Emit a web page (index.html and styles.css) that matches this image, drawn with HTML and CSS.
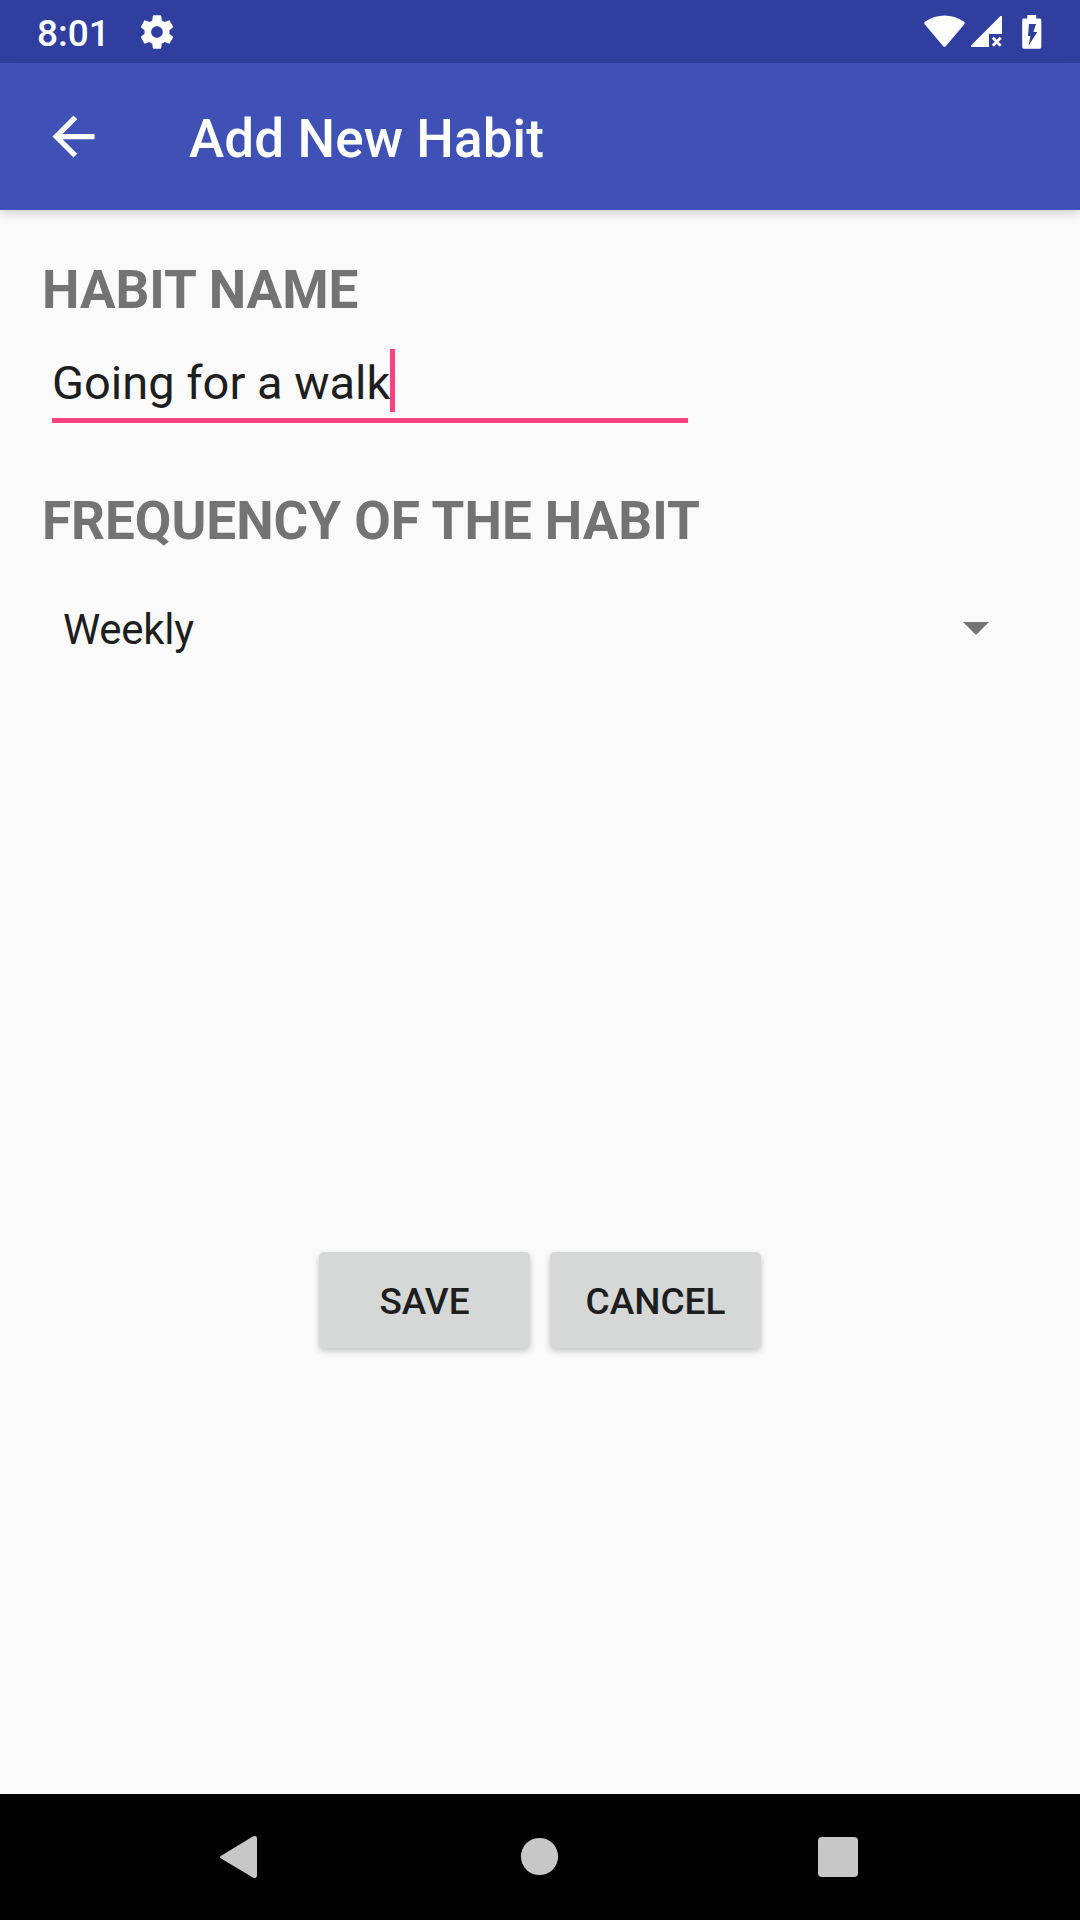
FILE: index.html
```html
<!DOCTYPE html>
<html lang="en">
<head>
<meta charset="utf-8">
<title>Add New Habit</title>
<link rel="stylesheet" href="styles.css">
</head>
<body>
<div class="status-bar">
  <span class="clock">8:01</span>
  <svg class="gear" viewBox="0 0 24 24"><path d="M19.43 12.98c.04-.32.07-.64.07-.98s-.03-.66-.07-.98l2.11-1.65c.19-.15.24-.42.12-.64l-2-3.46c-.12-.22-.39-.3-.61-.22l-2.49 1c-.52-.4-1.08-.73-1.69-.98l-.38-2.65C14.46 2.18 14.25 2 14 2h-4c-.25 0-.46.18-.49.42l-.38 2.65c-.61.25-1.17.59-1.69.98l-2.49-1c-.23-.09-.49 0-.61.22l-2 3.46c-.13.22-.07.49.12.64l2.11 1.65c-.04.32-.07.65-.07.98s.03.66.07.98l-2.11 1.65c-.19.15-.24.42-.12.64l2 3.46c.12.22.39.3.61.22l2.49-1c.52.4 1.08.73 1.69.98l.38 2.65c.03.24.24.42.49.42h4c.25 0 .46-.18.49-.42l.38-2.65c.61-.25 1.17-.59 1.69-.98l2.49 1c.23.09.49 0 .61-.22l2-3.46c.12-.22.07-.49-.12-.64l-2.11-1.65zM12 15.5c-1.93 0-3.5-1.57-3.5-3.5s1.57-3.5 3.5-3.5 3.5 1.57 3.5 3.5-1.57 3.5-3.5 3.5z"/></svg>
  <div class="system-icons">
    <svg class="wifi" viewBox="0 0 41 34"><path d="M.7 9.2Q-.4 7.600 1.200 6.500C13-1.600 28-1.600 39.800 6.500Q41.400 7.600 40.300 9.200L21.800 31.200Q20.500 32.500 19.200 31.200Z"/></svg>
    <svg class="signal" viewBox="0 0 31 32"><path d="M0 31V29.500L29.500 0H31V18H18V31Z"/><path class="cross" d="M21.800 21.800L29.700 29.700M29.700 21.800L21.800 29.700"/></svg>
    <svg class="battery" viewBox="0 0 20 34"><path fill-rule="evenodd" d="M5.300 0H14.200V3.500H18Q19.300 3.500 19.300 5V32Q19.300 33.700 17.800 33.700H1.700Q.2 33.700 .2 32V5Q.2 3.500 1.500 3.500H5.300ZM7 9L6 21H8.300L6.700 30.500L15.300 17H11.400L14 9Z"/></svg>
  </div>
</div>
<header class="app-bar">
  <svg class="back" viewBox="0 0 24 24"><path d="M20 11H7.830l5.590-5.590L12 4l-8 8 8 8 1.410-1.410L7.830 13H20v-2z"/></svg>
  <h1 class="title">Add New Habit</h1>
</header>
<main class="form">
  <h2 class="label">HABIT NAME</h2>
  <div class="text-field"><span class="value">Going for a walk</span><span class="caret"></span></div>
  <h2 class="label">FREQUENCY OF THE HABIT</h2>
  <div class="spinner">
    <span>Weekly</span>
    <svg class="arrow" viewBox="0 0 26 13"><path d="M0 0H26L13 13Z"/></svg>
  </div>
  <div class="actions">
    <button class="button" type="button">SAVE</button>
    <button class="button" type="button">CANCEL</button>
  </div>
</main>
<nav class="nav-bar">
  <svg viewBox="0 0 42 42"><path d="M2.500 19.600L33.800 .6Q38-1 38 2.500V39.500Q38 43 33.800 41.400L2.500 22.700Q-.7 21 2.500 19.600Z"/></svg>
  <svg viewBox="0 0 42 42"><circle cx="21.500" cy="20.500" r="18.600"/></svg>
  <svg viewBox="0 0 42 42"><rect x="1" y="1" width="40" height="40" rx="4"/></svg>
</nav>
</body>
</html>
```

FILE: styles.css
```css
* { box-sizing: border-box; }

body {
  margin: 0;
  height: 1920px;
  display: flex;
  flex-direction: column;
  background: #fafafa;
  color: #1e1e1e;
  font-family: Roboto, sans-serif;
  overflow: hidden;
}

svg { display: block; fill: #fff; flex: none; }

.status-bar {
  flex: none;
  height: 63px;
  display: flex;
  align-items: center;
  padding: 0 38px 0 37px;
  background: #303f9f;
  color: #fff;
}

.clock {
  width: 100px;
  padding-top: 3px;
  font-size: 37px;
  font-weight: 500;
  line-height: 43px;
}

.gear { width: 40px; height: 40px; }

.system-icons {
  display: flex;
  margin-left: auto;
}

.wifi { width: 41px; height: 34px; margin-right: 6px; }
.signal { width: 31px; height: 32px; margin: 1px 20px 0 0; }
.battery { width: 20px; height: 34px; }

.cross { stroke: #fff; stroke-width: 2.8; }

.app-bar {
  flex: none;
  height: 147px;
  display: flex;
  align-items: center;
  padding-left: 42px;
  background: #3f51b5;
  color: #fff;
  box-shadow: 0 3px 10px rgba(0, 0, 0, .18);
}

.back { width: 63px; height: 63px; }

.title {
  margin: 0 0 0 84px;
  padding-top: 4px;
  font-size: 53px;
  font-weight: 500;
  line-height: 62px;
  letter-spacing: .1px;
}

.form {
  flex: 1;
  display: flex;
  flex-direction: column;
  padding: 49px 42px 0;
}

.label {
  margin: 0;
  color: #737373;
  font-size: 53px;
  font-weight: 700;
  line-height: 62px;
}

.text-field {
  display: flex;
  align-items: flex-start;
  width: 636px;
  height: 74px;
  margin: 28px 0 67px 10px;
  border-bottom: 5px solid #ff4081;
  font-size: 47px;
}

.value { padding-top: 6px; line-height: 56px; }
.caret { width: 5px; height: 63px; background: #ff4081; }

.spinner {
  display: flex;
  align-items: center;
  justify-content: space-between;
  height: 84px;
  margin-top: 34px;
  padding: 0 49.5px 0 21px;
  font-size: 42px;
  line-height: 50px;
  letter-spacing: -.3px;
}

.spinner span { padding-top: 3px; }
.arrow { width: 26px; height: 13px; fill: #737373; }

.actions {
  display: flex;
  justify-content: center;
  gap: 20px;
  margin-top: 582px;
}

.button {
  width: 211px;
  height: 96px;
  padding: 3px 0 0;
  border: 0;
  border-radius: 5px;
  background: #d6d7d7;
  color: #1e1e1e;
  font: 500 37px/43px Roboto, sans-serif;
  box-shadow: 0 3px 6px rgba(0, 0, 0, .22);
}

.nav-bar {
  flex: none;
  height: 126px;
  display: flex;
  align-items: center;
  justify-content: space-between;
  padding: 0 221px 0 219px;
  background: #000;
}

.nav-bar svg { width: 42px; height: 42px; fill: #c7c7c7; }
```
